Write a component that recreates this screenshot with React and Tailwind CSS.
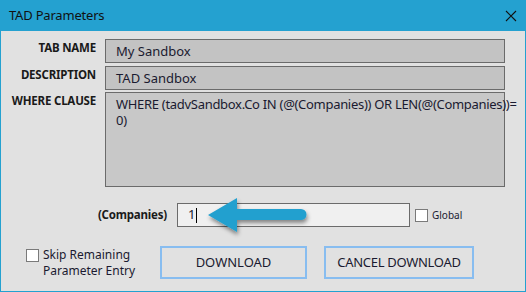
import React from 'react';

// -------------------------
// TAD Parameters dialog
// -------------------------
const font = { fontFamily: '"Noto Sans", "Open Sans", sans-serif' };

const Label = ({ children }) => (
  <div className="text-right text-[11.5px] font-bold text-[#1a1a1a] pt-[1px] leading-[16px] tracking-[-0.2px]">
    {children}
  </div>
);

const Field = ({ children, className = '' }) => (
  <div
    className={`border border-[#6b6b6b] bg-[#c3c3c3] px-[10px] text-[13px] text-[#1a1a30] leading-[16px] ${className}`}
  >
    {children}
  </div>
);

const CheckBox = () => (
  <div className="w-[13px] h-[13px] border border-[#7a7a7a] bg-white shrink-0" />
);

const Arrow = () => (
  <svg width="110" height="46" viewBox="0 0 110 46" className="absolute left-[28px] top-[-8px] pointer-events-none">
    <defs>
      <filter id="sh" x="-20%" y="-30%" width="140%" height="170%">
        <feDropShadow dx="1" dy="3" stdDeviation="2" floodColor="#000" floodOpacity="0.45" />
      </filter>
    </defs>
    <path
      d="M2 19 L31 2 L31 13 L95 13 A5 5 0 0 1 95 24 L31 24 L31 36 Z"
      fill="#24a0cf"
      filter="url(#sh)"
    />
  </svg>
);

export default function App() {
  return (
    <div className="w-[526px] h-[292px] flex flex-col bg-[#e1e1e1]" style={font}>
      {/* title bar */}
      <div className="h-[31px] bg-[#24a1d0] flex items-center pl-[9px] pr-[9px] shrink-0">
        <span className="text-[13px] text-[#111] flex-1 tracking-[-0.2px]">TAD Parameters</span>
        <svg width="12" height="12" viewBox="0 0 12 12">
          <path d="M1 1 L11 11 M11 1 L1 11" stroke="#111" strokeWidth="1.1" />
        </svg>
      </div>

      <div className="flex-1 flex flex-col border-x border-b border-[#24a1d0]">
        {/* fields */}
        <div className="grid grid-cols-[95px_400px] gap-x-[9px] gap-y-[3px] pt-[8px]">
          <Label>TAB NAME</Label>
          <Field className="h-[24px] flex items-center">My Sandbox</Field>
          <Label>DESCRIPTION</Label>
          <Field className="h-[24px] flex items-center">TAD Sandbox</Field>
          <div className="mt-[-1px]"><Label>WHERE CLAUSE</Label></div>
          <Field className="h-[95px] pt-[3px] bg-[#c8c8c8] mt-[-1px] whitespace-nowrap tracking-[-0.3px]">
            WHERE (tadvSandbox.Co IN (@(Companies)) OR LEN(@(Companies))=
            <br />
            0)
          </Field>
        </div>

        {/* companies parameter */}
        <div className="flex items-center mt-[16px] h-[24px]">
          <div className="w-[166px] text-right text-[11.5px] font-bold text-[#1a1a1a] tracking-[-0.2px]">(Companies)</div>
          <div className="relative ml-[10px] w-[233px] h-[24px] border border-[#6b6b6b] bg-[#f0f0f0] flex items-center pl-[10px] text-[13px] text-[#1a1a30]">
            <span>1</span>
            <span className="ml-[1px] w-[1px] h-[15px] bg-black" />
            <Arrow />
          </div>
          <div className="ml-[5px] flex items-center gap-[4px]">
            <CheckBox />
            <span className="text-[10px] text-[#1a1a30]">Global</span>
          </div>
        </div>

        {/* buttons */}
        <div className="flex items-center mt-[19px]">
          <div className="ml-[25px] w-[134px] flex items-start gap-[4px]">
            <div className="mt-[2px]"><CheckBox /></div>
            <span className="text-[12px] text-[#1a1a30] leading-[16px]">
              Skip Remaining
              <br />
              Parameter Entry
            </span>
          </div>
          <button className="w-[147px] h-[33px] border-2 border-[#88bdf0] text-[13px] text-[#1a1a30] bg-[#e1e1e1]">
            DOWNLOAD
          </button>
          <button className="ml-[17px] w-[150px] h-[33px] border-2 border-[#88bdf0] text-[13px] text-[#1a1a30] bg-[#e1e1e1] tracking-[-0.3px]">
            CANCEL DOWNLOAD
          </button>
        </div>
      </div>
    </div>
  );
}
